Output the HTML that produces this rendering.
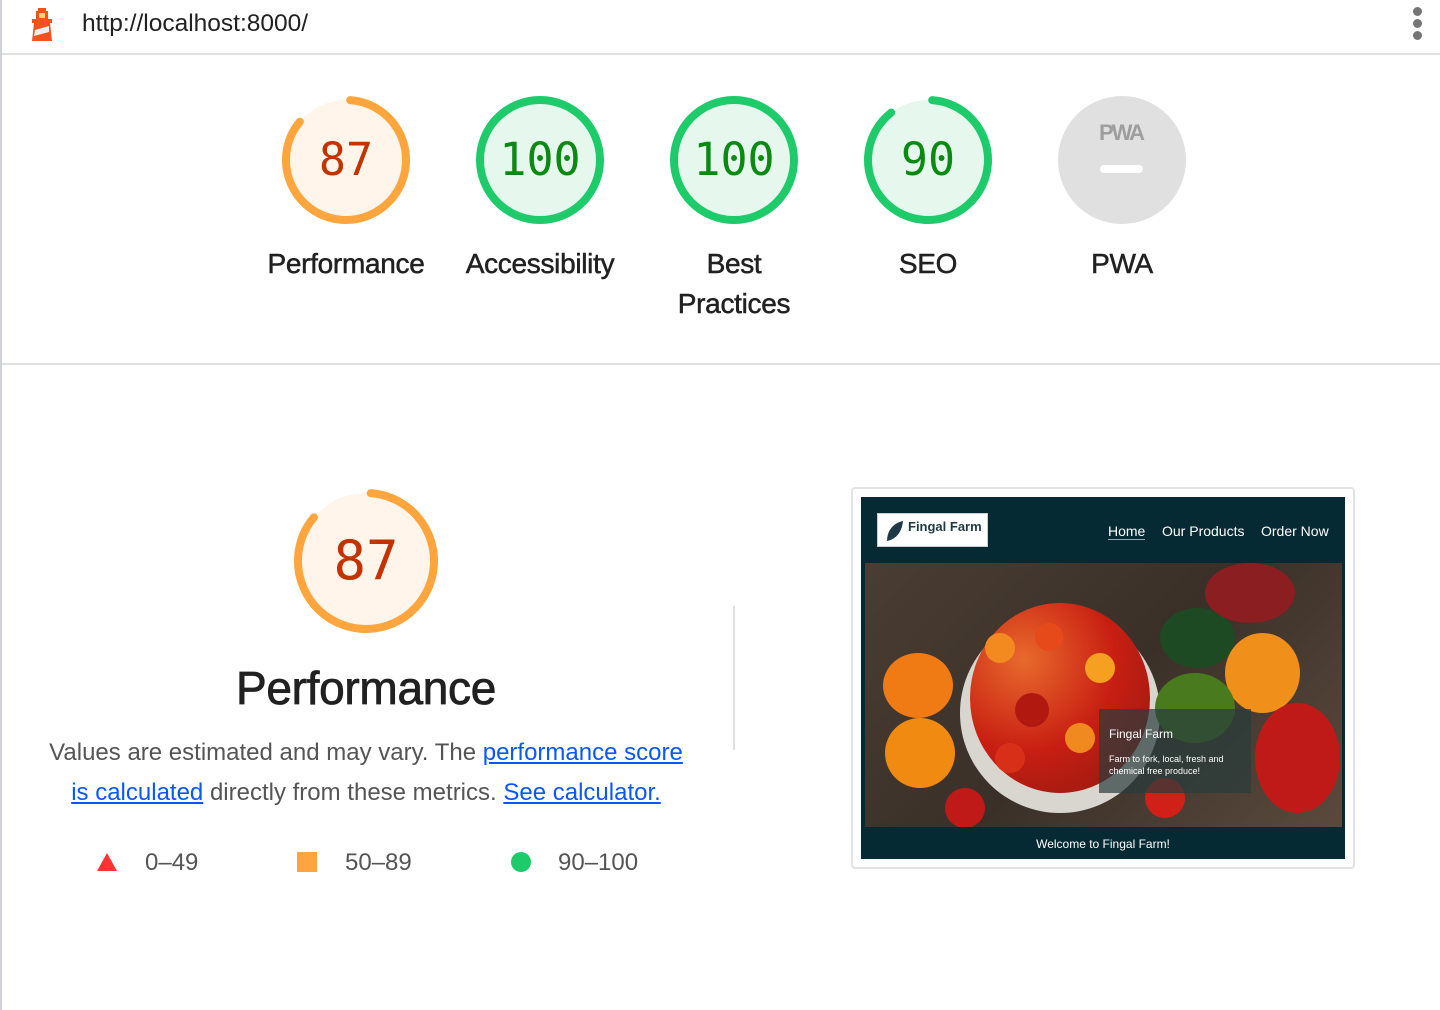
<!DOCTYPE html>
<html><head><meta charset="utf-8">
<style>
*{margin:0;padding:0;box-sizing:border-box}
body{width:1440px;height:1010px;overflow:hidden;background:#fff;font-family:"Liberation Sans",Arial,sans-serif;position:relative;color:#212121}
.lb{position:absolute;left:0;top:0;width:2px;height:1010px;background:#cfd3d8}
.top{position:absolute;left:2px;top:0;right:0;height:55px;border-bottom:2px solid #e0e0e0}
.url{position:absolute;left:80px;top:10px;font-size:24.5px;color:#212121}
.dots{position:absolute;left:1411px;top:7px}
.dots i{display:block;width:9px;height:9px;border-radius:50%;background:#757575;margin-bottom:3px}
.g{position:absolute;top:96px;width:128px;height:128px}
.g svg{position:absolute;left:0;top:0}
.g .n{position:absolute;left:0;top:0;width:128px;line-height:128px;text-align:center;font-family:"DejaVu Sans Mono","Liberation Mono",monospace;font-size:45px}
.lab{position:absolute;top:244px;width:200px;text-align:center;font-size:28px;line-height:40px;-webkit-text-stroke:0.5px #212121;letter-spacing:-0.3px}
.div{position:absolute;left:2px;right:0;top:363px;height:2px;background:#e0e0e0}
.vd{position:absolute;left:733px;top:606px;width:2px;height:144px;background:#e0e0e0}
.bt{position:absolute;left:0;width:732px;text-align:center}
a{color:#0b57ff;text-decoration:underline}
.shot{position:absolute;left:851px;top:487px;width:504px;height:382px;border:2px solid #e3e3e3;border-radius:4px;background:#fff}
.inner{position:absolute;left:8px;top:8px;width:484px;height:362px;background:#062a33;overflow:hidden}
.t{position:absolute;border-radius:50%}
</style></head><body>
<div class="lb"></div>
<div class="top">
<svg style="position:absolute;left:26px;top:6px" width="28" height="36" viewBox="0 0 28 36">
<rect x="10" y="2" width="8" height="3" fill="#f4511e"/>
<rect x="8" y="5" width="12" height="8" fill="#f4511e"/>
<rect x="11" y="7" width="6" height="5" fill="#fbd56b"/>
<rect x="4" y="13" width="20" height="4" fill="#f4511e"/>
<path d="M6 17h16l2 18H4z" fill="#f4511e"/>
<path d="M7 24l14-4v6L6 30z" fill="#eee"/>
</svg>
<div class="url">http://localhost:8000/</div>
<div class="dots"><i></i><i></i><i></i></div>
</div>

<div class="g" style="left:282px"><svg width="128" height="128"><circle cx="64" cy="64" r="60" fill="#fff5eb"/><circle cx="64" cy="64" r="60" fill="none" stroke="#ffa53d" stroke-width="8" stroke-linecap="round" stroke-dasharray="320 400" transform="rotate(-86 64 64)"/></svg><div class="n" style="color:#c33300">87</div></div>
<div class="g" style="left:476px"><svg width="128" height="128"><circle cx="64" cy="64" r="60" fill="#e6f8ee" stroke="#1ecb6a" stroke-width="8"/></svg><div class="n" style="color:#0b8a13">100</div></div>
<div class="g" style="left:670px"><svg width="128" height="128"><circle cx="64" cy="64" r="60" fill="#e6f8ee" stroke="#1ecb6a" stroke-width="8"/></svg><div class="n" style="color:#0b8a13">100</div></div>
<div class="g" style="left:864px"><svg width="128" height="128"><circle cx="64" cy="64" r="60" fill="#e6f8ee"/><circle cx="64" cy="64" r="60" fill="none" stroke="#1ecb6a" stroke-width="8" stroke-linecap="round" stroke-dasharray="333 400" transform="rotate(-86 64 64)"/></svg><div class="n" style="color:#0b8a13">90</div></div>
<div class="g" style="left:1058px"><svg width="128" height="128"><circle cx="64" cy="64" r="64" fill="#e0e0e0"/><text x="63" y="44" text-anchor="middle" font-family="Liberation Sans" font-weight="bold" font-size="22" fill="#9e9e9e" letter-spacing="-2">PWA</text><rect x="42" y="69" width="43" height="8" rx="4" fill="#fff"/></svg></div>

<div class="lab" style="left:246px">Performance</div>
<div class="lab" style="left:440px">Accessibility</div>
<div class="lab" style="left:634px">Best<br>Practices</div>
<div class="lab" style="left:828px">SEO</div>
<div class="lab" style="left:1022px">PWA</div>

<div class="div"></div>

<svg style="position:absolute;left:294px;top:489px" width="144" height="144"><circle cx="72" cy="72" r="68" fill="#fff5eb"/><circle cx="72" cy="72" r="68" fill="none" stroke="#ffa53d" stroke-width="8" stroke-linecap="round" stroke-dasharray="363 500" transform="rotate(-86 72 72)"/></svg>
<div style="position:absolute;left:294px;top:489px;width:144px;line-height:144px;text-align:center;font-family:'DejaVu Sans Mono',monospace;font-size:54px;color:#c33300">87</div>
<div class="bt" style="top:661px;font-size:46px;-webkit-text-stroke:0.8px #212121;left:0;letter-spacing:-0.3px">Performance</div>
<div class="bt" style="top:733px;font-size:24px;line-height:40px;color:#555;left:0">Values are estimated and may vary. The <a>performance score</a><br><a>is calculated</a> directly from these metrics. <a>See calculator.</a></div>

<svg style="position:absolute;left:97px;top:852px" width="20" height="20"><path d="M10 1L20 19H0z" fill="#ff3333"/></svg>
<div style="position:absolute;left:145px;top:849px;font-size:24px;color:#555">0–49</div>
<div style="position:absolute;left:297px;top:852px;width:20px;height:20px;background:#ffa53d"></div>
<div style="position:absolute;left:345px;top:849px;font-size:24px;color:#555">50–89</div>
<div style="position:absolute;left:511px;top:852px;width:20px;height:20px;border-radius:50%;background:#1ecb6a"></div>
<div style="position:absolute;left:558px;top:849px;font-size:24px;color:#555">90–100</div>

<div class="vd"></div>

<div class="shot"><div class="inner">
<div style="position:absolute;left:16px;top:16px;width:111px;height:34px;background:#fff;border:1px solid #ccc"></div>
<svg style="position:absolute;left:22px;top:22px" width="22" height="24"><path d="M4 22C4 12 10 4 20 2C19 12 14 20 4 22z" fill="#1f3a44"/></svg>
<div style="position:absolute;left:47px;top:22px;font-size:13px;font-weight:bold;color:#1f3a44">Fingal Farm</div>
<div style="position:absolute;left:247px;top:26px;font-size:14px;color:#fff;border-bottom:1px solid #9ab">Home</div>
<div style="position:absolute;left:301px;top:26px;font-size:14px;color:#fff">Our Products</div>
<div style="position:absolute;left:400px;top:26px;font-size:14px;color:#fff">Order Now</div>
<div style="position:absolute;left:4px;top:66px;width:477px;height:264px;overflow:hidden;background:linear-gradient(135deg,#4a3d33,#3a3028 50%,#5a4a3d)">
<div class="t" style="left:95px;top:50px;width:200px;height:200px;background:#d9d6d0"></div>
<div class="t" style="left:105px;top:40px;width:180px;height:190px;background:radial-gradient(circle at 30% 30%,#e86a2c,#c81e12 50%,#8a1a10)"></div>
<div class="t" style="left:120px;top:70px;width:30px;height:30px;background:#f28a20"></div>
<div class="t" style="left:170px;top:60px;width:28px;height:28px;background:#e64a1a"></div>
<div class="t" style="left:220px;top:90px;width:30px;height:30px;background:#f5a020"></div>
<div class="t" style="left:150px;top:130px;width:34px;height:34px;background:#b01810"></div>
<div class="t" style="left:200px;top:160px;width:30px;height:30px;background:#f08a20"></div>
<div class="t" style="left:130px;top:180px;width:30px;height:30px;background:#d83018"></div>
<div class="t" style="left:18px;top:90px;width:70px;height:65px;background:#f07a14"></div>
<div class="t" style="left:20px;top:155px;width:70px;height:70px;background:#f08a10"></div>
<div class="t" style="left:295px;top:45px;width:75px;height:60px;background:#1d4a22"></div>
<div class="t" style="left:360px;top:70px;width:75px;height:80px;background:#f0901a"></div>
<div class="t" style="left:390px;top:140px;width:85px;height:110px;background:#c01a18"></div>
<div class="t" style="left:340px;top:0;width:90px;height:60px;background:#8a1e20"></div>
<div class="t" style="left:290px;top:110px;width:80px;height:70px;background:#4a7a1e"></div>
<div class="t" style="left:80px;top:225px;width:40px;height:40px;background:#c01a18"></div>
<div class="t" style="left:280px;top:215px;width:40px;height:40px;background:#d02018"></div>
<div style="position:absolute;left:234px;top:146px;width:152px;height:84px;background:rgba(40,60,60,.7)"></div>
<div style="position:absolute;left:244px;top:164px;font-size:12px;color:#fff">Fingal Farm</div>
<div style="position:absolute;left:244px;top:190px;font-size:9px;line-height:12px;color:#fff">Farm to fork, local, fresh and<br>chemical free produce!</div>
</div>
<div style="position:absolute;left:0;top:340px;width:484px;text-align:center;font-size:12px;color:#fff">Welcome to Fingal Farm!</div>
</div></div>
</body></html>
